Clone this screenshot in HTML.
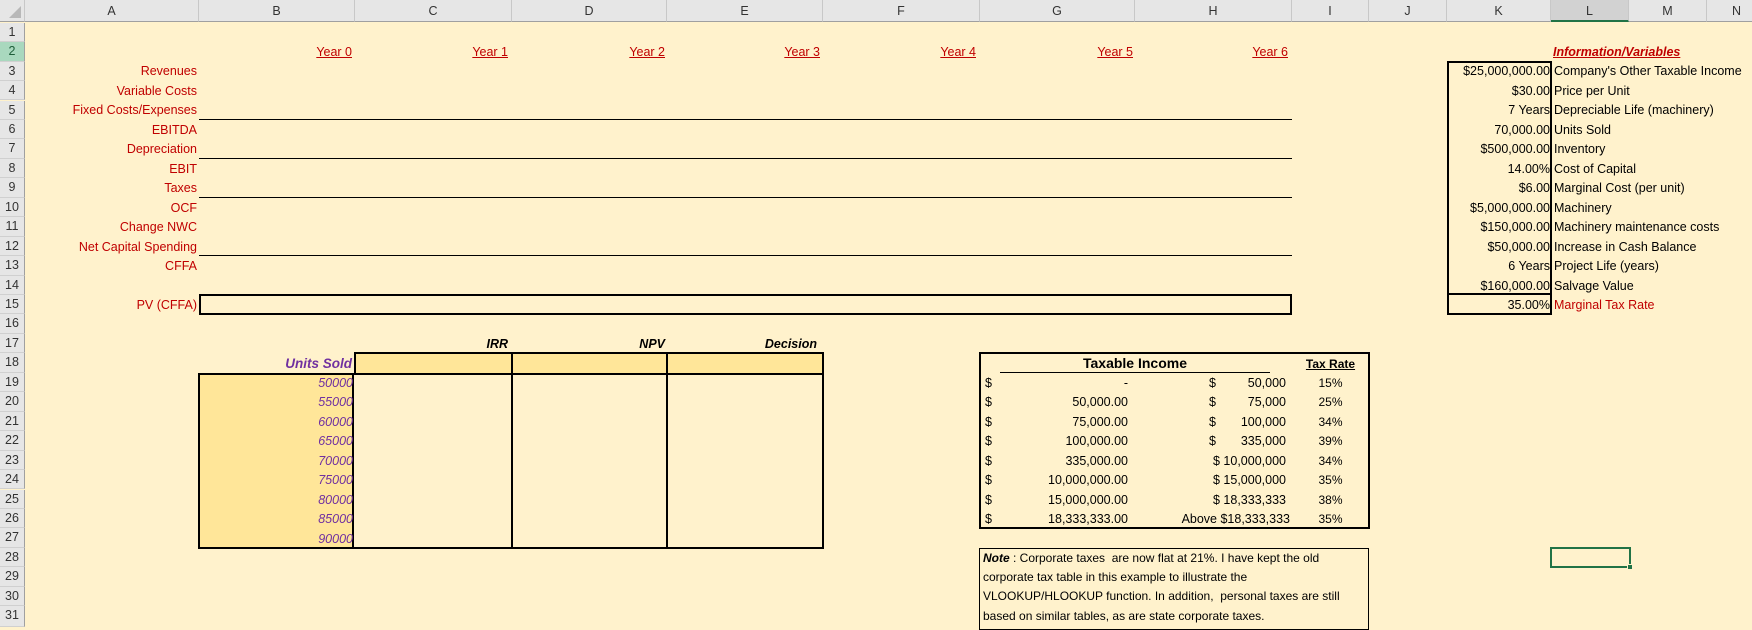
<!DOCTYPE html>
<html><head><meta charset="utf-8"><style>
*{margin:0;padding:0;box-sizing:border-box}
body{width:1752px;height:627px;overflow:hidden;background:#FFF2CC;font-family:"Liberation Sans",sans-serif;font-size:12.5px;position:relative;color:#000}
.a{position:absolute;white-space:nowrap;line-height:19px;height:19px}
.ch{position:absolute;top:0;height:22px;background:#E6E6E6;border-right:1px solid #C8C8C8;border-bottom:1px solid #A0A0A0;text-align:center;line-height:22px;color:#333;font-size:12.5px}
.rh{position:absolute;left:0;width:25px;background:#E6E6E6;border-right:1px solid #A0A0A0;border-bottom:1px solid #D0D0D0;text-align:center;color:#333;font-size:12.5px;line-height:19px}
.r{text-align:right}.red{color:#C00000}
.yr{color:#C00000;text-decoration:underline}
.ln{position:absolute;left:199px;width:1093px;height:1px;background:#000}
.pur{color:#7030A0;font-style:italic}
</style></head><body>
<!-- column headers -->
<div class="ch" style="left:0;width:25px;background:#E6E6E6"><svg width="12" height="12" style="position:absolute;right:3px;bottom:3px"><polygon points="12,0 12,12 0,12" fill="#B8B8B8"/></svg></div>
<div class="ch" style="left:25px;width:174px">A</div>
<div class="ch" style="left:199px;width:156px">B</div>
<div class="ch" style="left:355px;width:157px">C</div>
<div class="ch" style="left:512px;width:155px">D</div>
<div class="ch" style="left:667px;width:156px">E</div>
<div class="ch" style="left:823px;width:157px">F</div>
<div class="ch" style="left:980px;width:155px">G</div>
<div class="ch" style="left:1135px;width:157px">H</div>
<div class="ch" style="left:1292px;width:77px">I</div>
<div class="ch" style="left:1369px;width:78px">J</div>
<div class="ch" style="left:1447px;width:104px">K</div>
<div class="ch" style="left:1551px;width:78px;background:#D2D2D2;border-bottom:2px solid #217346">L</div>
<div class="ch" style="left:1629px;width:78px">M</div>
<div class="ch" style="left:1707px;width:60px">N</div>
<!-- row headers -->
<div class="rh" style="top:22.7px;height:19.45px">1</div>
<div class="rh" style="top:42.15px;height:19.45px;background:#A9D8BE;color:#1E5E3A">2</div>
<div class="rh" style="top:61.6px;height:19.45px">3</div>
<div class="rh" style="top:81.05px;height:19.45px">4</div>
<div class="rh" style="top:100.5px;height:19.45px">5</div>
<div class="rh" style="top:119.95px;height:19.45px">6</div>
<div class="rh" style="top:139.4px;height:19.45px">7</div>
<div class="rh" style="top:158.85px;height:19.45px">8</div>
<div class="rh" style="top:178.3px;height:19.45px">9</div>
<div class="rh" style="top:197.75px;height:19.45px">10</div>
<div class="rh" style="top:217.2px;height:19.45px">11</div>
<div class="rh" style="top:236.65px;height:19.45px">12</div>
<div class="rh" style="top:256.1px;height:19.45px">13</div>
<div class="rh" style="top:275.55px;height:19.45px">14</div>
<div class="rh" style="top:295px;height:19.45px">15</div>
<div class="rh" style="top:314.45px;height:19.45px">16</div>
<div class="rh" style="top:333.9px;height:19.45px">17</div>
<div class="rh" style="top:353.35px;height:19.45px">18</div>
<div class="rh" style="top:372.8px;height:19.45px">19</div>
<div class="rh" style="top:392.25px;height:19.45px">20</div>
<div class="rh" style="top:411.7px;height:19.45px">21</div>
<div class="rh" style="top:431.15px;height:19.45px">22</div>
<div class="rh" style="top:450.6px;height:19.45px">23</div>
<div class="rh" style="top:470.05px;height:19.45px">24</div>
<div class="rh" style="top:489.5px;height:19.45px">25</div>
<div class="rh" style="top:508.95px;height:19.45px">26</div>
<div class="rh" style="top:528.4px;height:19.45px">27</div>
<div class="rh" style="top:547.85px;height:19.45px">28</div>
<div class="rh" style="top:567.3px;height:19.45px">29</div>
<div class="rh" style="top:586.75px;height:19.45px">30</div>
<div class="rh" style="top:606.2px;height:21px">31</div>

<!-- years -->
<div class="a r yr" style="left:199px;width:153px;top:42.5px">Year 0</div>
<div class="a r yr" style="left:355px;width:153px;top:42.5px">Year 1</div>
<div class="a r yr" style="left:512px;width:153px;top:42.5px">Year 2</div>
<div class="a r yr" style="left:667px;width:153px;top:42.5px">Year 3</div>
<div class="a r yr" style="left:823px;width:153px;top:42.5px">Year 4</div>
<div class="a r yr" style="left:980px;width:153px;top:42.5px">Year 5</div>
<div class="a r yr" style="left:1135px;width:153px;top:42.5px">Year 6</div>
<!-- labels -->
<div class="a r red" style="left:25px;width:172px;top:62px">Revenues</div>
<div class="a r red" style="left:25px;width:172px;top:81.5px">Variable Costs</div>
<div class="a r red" style="left:25px;width:172px;top:101px">Fixed Costs/Expenses</div>
<div class="a r red" style="left:25px;width:172px;top:120.5px">EBITDA</div>
<div class="a r red" style="left:25px;width:172px;top:140px">Depreciation</div>
<div class="a r red" style="left:25px;width:172px;top:159.5px">EBIT</div>
<div class="a r red" style="left:25px;width:172px;top:179px">Taxes</div>
<div class="a r red" style="left:25px;width:172px;top:198.5px">OCF</div>
<div class="a r red" style="left:25px;width:172px;top:218px">Change NWC</div>
<div class="a r red" style="left:25px;width:172px;top:237.5px">Net Capital Spending</div>
<div class="a r red" style="left:25px;width:172px;top:257px">CFFA</div>
<div class="a r red" style="left:25px;width:172px;top:296px">PV (CFFA)</div>
<div class="ln" style="top:118.5px"></div>
<div class="ln" style="top:157.5px"></div>
<div class="ln" style="top:196.5px"></div>
<div class="ln" style="top:255px"></div>
<div style="position:absolute;left:199px;top:294px;width:1093px;height:21px;border:2px solid #000"></div>

<!-- info table -->
<div class="a" style="left:1553px;top:42.5px;color:#C00000;font-weight:bold;font-style:italic;text-decoration:underline">Information/Variables</div>
<div style="position:absolute;left:1447px;top:61px;width:105px;height:234px;border:2px solid #000"></div>
<div style="position:absolute;left:1447px;top:293px;width:105px;height:22px;border:2px solid #000"></div>
<div class="a r" style="left:1447px;width:103px;top:62px">$25,000,000.00</div>
<div class="a r" style="left:1447px;width:103px;top:81.5px">$30.00</div>
<div class="a r" style="left:1447px;width:103px;top:101px">7 Years</div>
<div class="a r" style="left:1447px;width:103px;top:120.5px">70,000.00</div>
<div class="a r" style="left:1447px;width:103px;top:140px">$500,000.00</div>
<div class="a r" style="left:1447px;width:103px;top:159.5px">14.00%</div>
<div class="a r" style="left:1447px;width:103px;top:179px">$6.00</div>
<div class="a r" style="left:1447px;width:103px;top:198.5px">$5,000,000.00</div>
<div class="a r" style="left:1447px;width:103px;top:218px">$150,000.00</div>
<div class="a r" style="left:1447px;width:103px;top:237.5px">$50,000.00</div>
<div class="a r" style="left:1447px;width:103px;top:257px">6 Years</div>
<div class="a r" style="left:1447px;width:103px;top:276.5px">$160,000.00</div>
<div class="a r" style="left:1447px;width:103px;top:296px">35.00%</div>
<div class="a" style="left:1554px;top:62px">Company's Other Taxable Income</div>
<div class="a" style="left:1554px;top:81.5px">Price per Unit</div>
<div class="a" style="left:1554px;top:101px">Depreciable Life (machinery)</div>
<div class="a" style="left:1554px;top:120.5px">Units Sold</div>
<div class="a" style="left:1554px;top:140px">Inventory</div>
<div class="a" style="left:1554px;top:159.5px">Cost of Capital</div>
<div class="a" style="left:1554px;top:179px">Marginal Cost (per unit)</div>
<div class="a" style="left:1554px;top:198.5px">Machinery</div>
<div class="a" style="left:1554px;top:218px">Machinery maintenance costs</div>
<div class="a" style="left:1554px;top:237.5px">Increase in Cash Balance</div>
<div class="a" style="left:1554px;top:257px">Project Life (years)</div>
<div class="a" style="left:1554px;top:276.5px">Salvage Value</div>
<div class="a red" style="left:1554px;top:296px">Marginal Tax Rate</div>

<!-- sensitivity table -->
<div class="a r" style="left:355px;width:153px;top:334.5px;font-weight:bold;font-style:italic">IRR</div>
<div class="a r" style="left:512px;width:153px;top:334.5px;font-weight:bold;font-style:italic">NPV</div>
<div class="a r" style="left:667px;width:150px;top:334.5px;font-weight:bold;font-style:italic">Decision</div>
<div class="a r" style="left:199px;width:153px;top:354px;color:#7030A0;font-weight:bold;font-style:italic;font-size:13.5px">Units Sold</div>
<div style="position:absolute;left:354px;top:352px;width:470px;height:23px;background:#FFE699;border:2px solid #000"></div>
<div style="position:absolute;left:511px;top:352px;width:2px;height:196px;background:#000"></div>
<div style="position:absolute;left:666px;top:352px;width:2px;height:196px;background:#000"></div>
<div style="position:absolute;left:198px;top:373px;width:626px;height:176px;border:2px solid #000"></div>
<div style="position:absolute;left:200px;top:375px;width:154px;height:172px;background:#FFE699;border-right:2px solid #000"></div>
<div class="a r pur" style="left:199px;width:154px;top:373.5px">50000</div>
<div class="a r pur" style="left:199px;width:154px;top:393px">55000</div>
<div class="a r pur" style="left:199px;width:154px;top:412.5px">60000</div>
<div class="a r pur" style="left:199px;width:154px;top:432px">65000</div>
<div class="a r pur" style="left:199px;width:154px;top:451.5px">70000</div>
<div class="a r pur" style="left:199px;width:154px;top:471px">75000</div>
<div class="a r pur" style="left:199px;width:154px;top:490.5px">80000</div>
<div class="a r pur" style="left:199px;width:154px;top:510px">85000</div>
<div class="a r pur" style="left:199px;width:154px;top:529.5px">90000</div>

<!-- tax table -->
<div style="position:absolute;left:979px;top:352px;width:391px;height:177px;border:2px solid #000"></div>
<div class="a" style="left:1000px;width:270px;top:354px;text-align:center;font-weight:bold;font-size:14px">Taxable Income</div>
<div style="position:absolute;left:1000px;top:372px;width:270px;height:1px;background:#000"></div>
<div class="a" style="left:1292px;width:77px;top:355px;text-align:center;font-weight:bold;font-size:12px;text-decoration:underline">Tax Rate</div>
<div class="a" style="left:985px;top:373.5px">$</div><div class="a r" style="left:1000px;width:128px;top:373.5px">-</div><div class="a" style="left:1209px;top:373.5px">$</div><div class="a r" style="left:1200px;width:86px;top:373.5px">50,000</div><div class="a" style="left:1292px;width:77px;top:373.5px;text-align:center;font-size:12px">15%</div>
<div class="a" style="left:985px;top:393px">$</div><div class="a r" style="left:1000px;width:128px;top:393px">50,000.00</div><div class="a" style="left:1209px;top:393px">$</div><div class="a r" style="left:1200px;width:86px;top:393px">75,000</div><div class="a" style="left:1292px;width:77px;top:393px;text-align:center;font-size:12px">25%</div>
<div class="a" style="left:985px;top:412.5px">$</div><div class="a r" style="left:1000px;width:128px;top:412.5px">75,000.00</div><div class="a" style="left:1209px;top:412.5px">$</div><div class="a r" style="left:1200px;width:86px;top:412.5px">100,000</div><div class="a" style="left:1292px;width:77px;top:412.5px;text-align:center;font-size:12px">34%</div>
<div class="a" style="left:985px;top:432px">$</div><div class="a r" style="left:1000px;width:128px;top:432px">100,000.00</div><div class="a" style="left:1209px;top:432px">$</div><div class="a r" style="left:1200px;width:86px;top:432px">335,000</div><div class="a" style="left:1292px;width:77px;top:432px;text-align:center;font-size:12px">39%</div>
<div class="a" style="left:985px;top:451.5px">$</div><div class="a r" style="left:1000px;width:128px;top:451.5px">335,000.00</div><div class="a r" style="left:1180px;width:106px;top:451.5px">$ 10,000,000</div><div class="a" style="left:1292px;width:77px;top:451.5px;text-align:center;font-size:12px">34%</div>
<div class="a" style="left:985px;top:471px">$</div><div class="a r" style="left:1000px;width:128px;top:471px">10,000,000.00</div><div class="a r" style="left:1180px;width:106px;top:471px">$ 15,000,000</div><div class="a" style="left:1292px;width:77px;top:471px;text-align:center;font-size:12px">35%</div>
<div class="a" style="left:985px;top:490.5px">$</div><div class="a r" style="left:1000px;width:128px;top:490.5px">15,000,000.00</div><div class="a r" style="left:1180px;width:106px;top:490.5px">$ 18,333,333</div><div class="a" style="left:1292px;width:77px;top:490.5px;text-align:center;font-size:12px">38%</div>
<div class="a" style="left:985px;top:510px">$</div><div class="a r" style="left:1000px;width:128px;top:510px">18,333,333.00</div><div class="a r" style="left:1150px;width:140px;top:510px">Above $18,333,333</div><div class="a" style="left:1292px;width:77px;top:510px;text-align:center;font-size:12px">35%</div>

<!-- note -->
<div style="position:absolute;left:979px;top:547.5px;width:390px;height:82px;border:1px solid #000;padding:0 0 0 3px;font-size:12px;line-height:19.45px;white-space:nowrap"><b><i>Note</i></b> : Corporate taxes&nbsp; are now flat at 21%. I have kept the old<br>corporate tax table in this example to illustrate the<br>VLOOKUP/HLOOKUP function. In addition,&nbsp; personal taxes are still<br>based on similar tables, as are state corporate taxes.</div>

<!-- selected cell -->
<div style="position:absolute;left:1550px;top:547px;width:81px;height:21px;border:2px solid #217346"></div>
<div style="position:absolute;left:1627px;top:564px;width:6px;height:6px;background:#217346;border:1px solid #FFF2CC"></div>
</body></html>
